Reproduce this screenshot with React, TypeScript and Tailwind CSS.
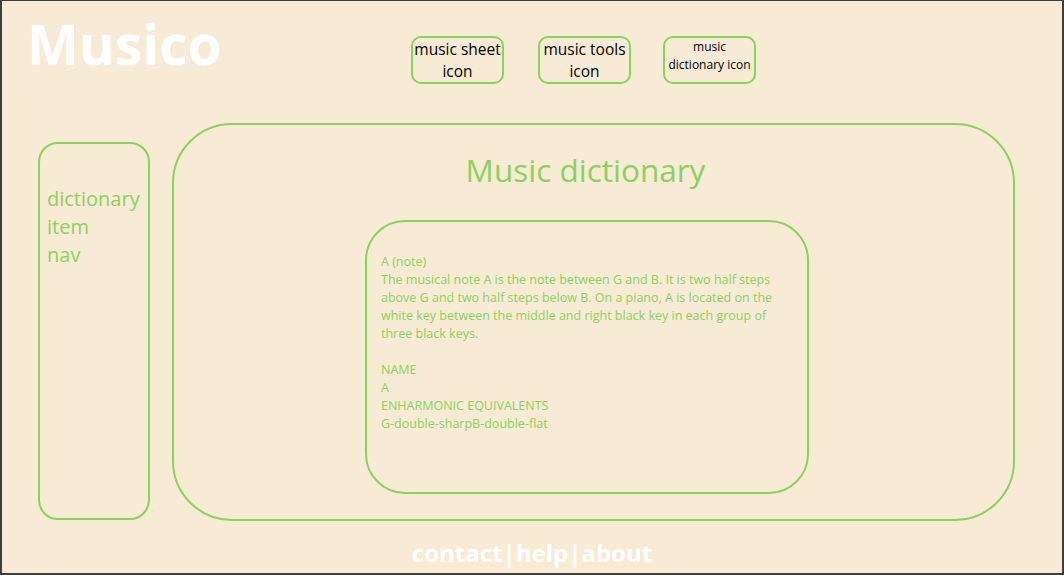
export default function App() {
  const green = "border-[#8bd15d]";
  return (
    <div
      className="w-[1064px] h-[575px] bg-[#f8ebd5] border-t border-l-2 border-r-2 border-b-2 border-[#3e3e3e] flex flex-col overflow-hidden"
      style={{ fontFamily: '"Open Sans", sans-serif' }}
    >
      <div className="h-[122px] flex items-start">
        <div className="w-[409px] pl-[25px] pt-[15px] text-[55px] leading-none font-bold text-white">Musico</div>
        <div className="pt-[35px] flex">
          <div className={`w-[93px] h-[48px] rounded-[10px] border-2 ${green} flex items-center justify-center text-center text-[15.5px] leading-[22px] text-black`}>
            music sheet
            <br />
            icon
          </div>
          <div className={`ml-[34px] w-[93px] h-[48px] rounded-[10px] border-2 ${green} flex items-center justify-center text-center text-[15.5px] leading-[22px] text-black`}>
            music tools
            <br />
            icon
          </div>
          <div className={`ml-[32px] w-[93px] h-[48px] rounded-[10px] border-2 ${green} flex items-center justify-center pb-[9px] text-center text-[12px] leading-[18px] text-black`}>
            music
            <br />
            dictionary icon
          </div>
        </div>
      </div>
      <div className="flex items-start">
        <div className={`ml-[36px] mt-[19px] w-[112px] h-[378px] rounded-[20px] border-2 ${green} pl-[7px] pt-[41px] text-[20px] leading-[28px] text-[#8bd15d]`}>
          dictionary
          <br />
          item
          <br />
          nav
        </div>
        <div className={`ml-[22px] w-[843px] h-[398px] rounded-[60px] border-2 ${green} flex flex-col`}>
          <div className="pt-[23px] pr-[16px] text-center text-[31.5px] leading-[43px] text-[#8bd15d]">Music dictionary</div>
          <div className={`mt-[29px] ml-[191px] w-[444px] h-[274px] rounded-[40px] border-2 ${green} pl-[14px] pt-[31px] text-[12.5px] leading-[18px] text-[#8bd15d]`}>
            <div className="w-[400px]">
              <p>A (note)</p>
              <p>
                The musical note A is the note between G and B. It is two half steps above G and two half steps below B. On a piano, A is located on the white key between the middle and right black key in each group of three black keys.
              </p>
              <p className="mt-[18px]">NAME</p>
              <p>A</p>
              <p>ENHARMONIC EQUIVALENTS</p>
              <p>G-double-sharpB-double-flat</p>
            </div>
          </div>
        </div>
      </div>
      <div className="mt-[16px] text-center text-[24px] leading-[32px] font-bold text-white">
        contact|help|about
      </div>
    </div>
  );
}
